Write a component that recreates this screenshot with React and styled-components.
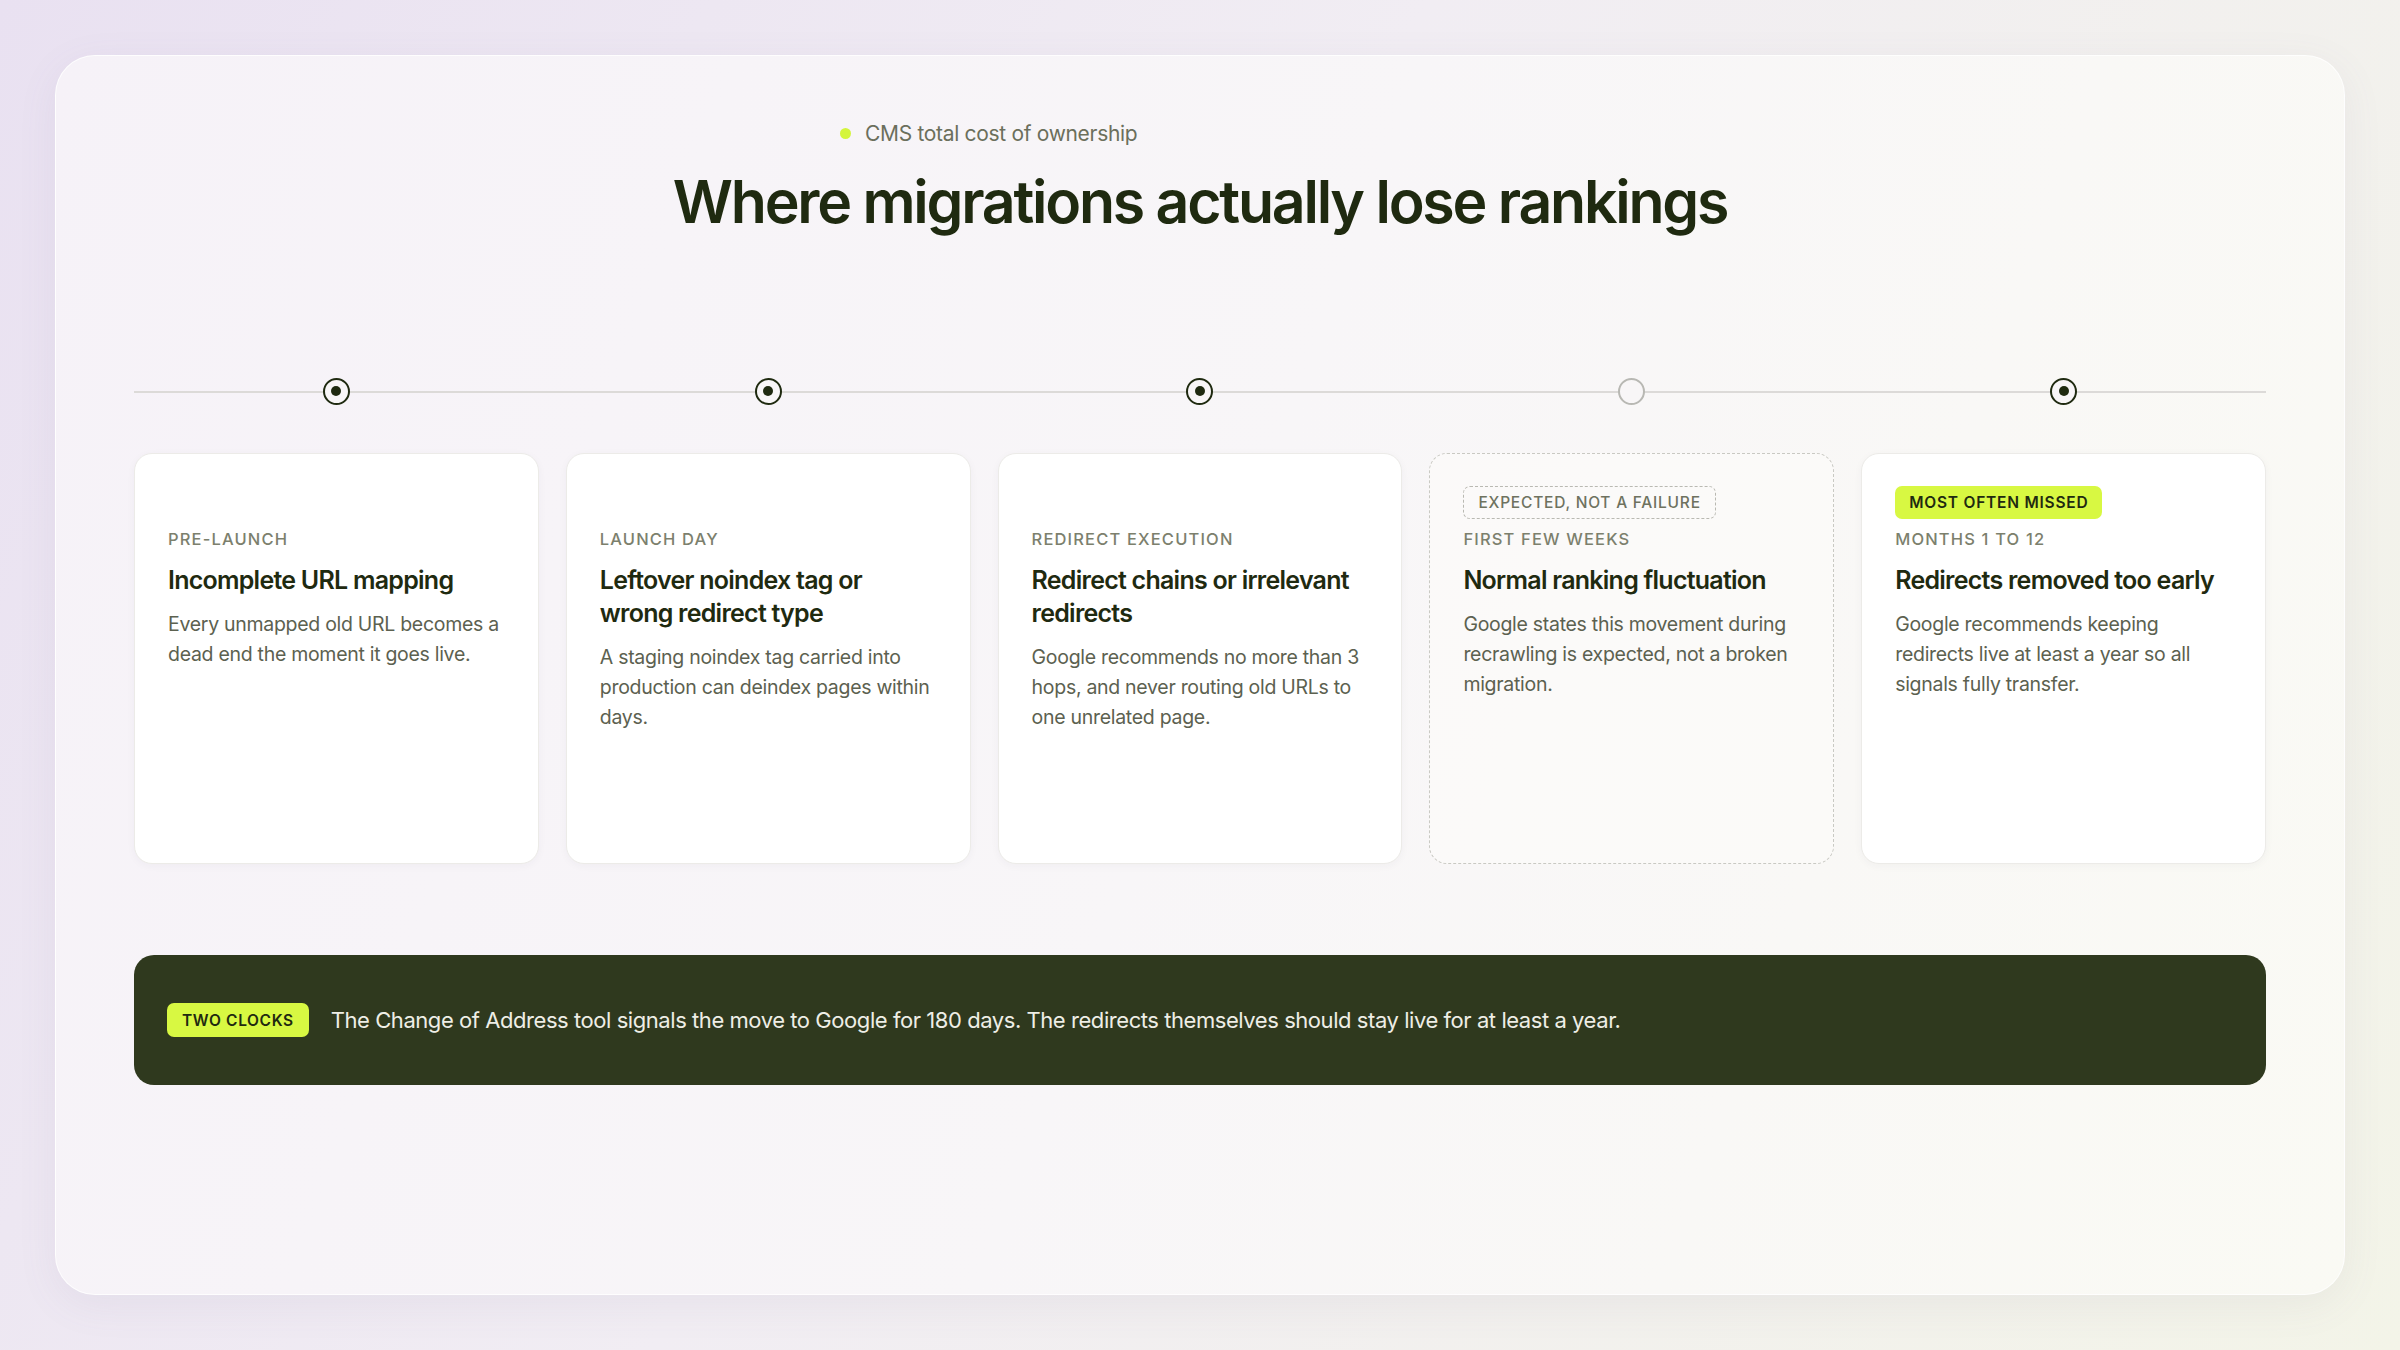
import React from "react";
import styled, { createGlobalStyle } from "styled-components";

const Global = createGlobalStyle`
  html, body { margin: 0; padding: 0; }
  body {
    width: 2400px; height: 1350px; overflow: hidden;
    font-family: Inter, "Noto Sans", sans-serif;
    background: linear-gradient(120deg, #e9e1f1 0%, #f1edf3 45%, #f3f4e8 100%);
  }
`;

const Page = styled.div`
  box-sizing: border-box;
  width: 2400px; height: 1350px;
  padding: 55px 55px;
`;

const Panel = styled.div`
  box-sizing: border-box;
  height: 1240px;
  border-radius: 40px;
  background: linear-gradient(110deg, #f6f2f8 0%, #f8f6f8 50%, #fafaf4 100%);
  border: 1px solid rgba(255,255,255,0.8);
  box-shadow: 0 10px 40px rgba(120, 100, 140, 0.08);
  padding: 62px 78px 0;
`;

const Eyebrow = styled.div`
  display: flex; align-items: center; gap: 14px;
  margin-left: 706px;
  font-size: 21px; color: #6b6f5c; height: 30px; letter-spacing: -0.015em;
`;

const Dot = styled.span`
  width: 11px; height: 11px; border-radius: 50%; background: #d4f53c;
`;

const Title = styled.h1`
  margin: 18px 0 0; text-align: center;
  font-size: 59px; font-weight: 600; letter-spacing: -0.038em;
  color: #1f2a10; line-height: 72px;
`;

const Timeline = styled.div`
  position: relative;
  margin-top: 139px;
  display: grid; grid-template-columns: repeat(5, 1fr); gap: 27px;
  height: 28px; align-items: center;
  &::before {
    content: ""; position: absolute; left: 0; right: 0; top: 50%;
    height: 1.5px; background: #dcdad8;
  }
`;

const Marker = styled.div`
  justify-self: center; position: relative;
  box-sizing: border-box; width: 27px; height: 27px; border-radius: 50%;
  border: 2.5px solid ${p => p.$empty ? "#b8b8b3" : "#1f2a10"};
  background: #f8f6f7;
  display: flex; align-items: center; justify-content: center;
  &::after {
    content: ""; display: ${p => p.$empty ? "none" : "block"};
    width: 10px; height: 10px; border-radius: 50%; background: #1f2a10;
  }
`;

const Cards = styled.div`
  margin-top: 48px;
  display: grid; grid-template-columns: repeat(5, 1fr); gap: 27px;
`;

const Card = styled.div`
  box-sizing: border-box; height: 411px;
  border-radius: 18px; padding: 32px 33px;
  background: ${p => p.$dashed ? "rgba(252,251,249,0.7)" : "#fff"};
  border: 1.5px ${p => p.$dashed ? "dashed #c9c9c3" : "solid #ecebe8"};
  box-shadow: ${p => p.$dashed ? "none" : "0 2px 8px rgba(60,50,70,0.04)"};
`;

const TagSlot = styled.div`height: 33px; margin-bottom: 8px; display: flex;`;

const Tag = styled.span`
  box-sizing: border-box; height: 33px; display: inline-flex; align-items: center;
  padding: 0 14px; border-radius: 7px;
  font-size: 15.5px; font-weight: 600; letter-spacing: 0.05em;
  ${p => p.$dashed
    ? "border: 1.5px dashed #b9b9b2; color: #6e725f; font-weight: 500;"
    : "background: #d8f842; color: #1f2a10;"}
`;

const Label = styled.div`
  font-size: 16.5px; font-weight: 500; letter-spacing: 0.07em;
  color: #7c806d; text-transform: uppercase; line-height: 24px;
`;

const CardTitle = styled.h3`
  margin: 13px 0 0; font-size: 25px; font-weight: 600; letter-spacing: -0.03em;
  line-height: 33px; color: #1f2a10;
`;

const Body = styled.p`
  margin: 12px 0 0; font-size: 19.5px; line-height: 30px; color: #5c6150;
  letter-spacing: -0.015em;
`;

const Banner = styled.div`
  margin-top: 91px; box-sizing: border-box; height: 130px;
  border-radius: 20px; background: #2f391e;
  display: flex; align-items: center; gap: 22px; padding: 0 33px;
`;

const BannerTag = styled.span`
  box-sizing: border-box; height: 34px; display: inline-flex; align-items: center;
  padding: 0 15px; border-radius: 7px; background: #d8f842; color: #1f2a10;
  font-size: 15.5px; font-weight: 600; letter-spacing: 0.04em;
`;

const BannerText = styled.span`
  font-size: 22px; color: #eeeee6; letter-spacing: -0.02em;
`;

const steps = [
  { label: "Pre-launch", title: "Incomplete URL mapping", body: "Every unmapped old URL becomes a dead end the moment it goes live." },
  { label: "Launch day", title: "Leftover noindex tag or wrong redirect type", body: "A staging noindex tag carried into production can deindex pages within days." },
  { label: "Redirect execution", title: "Redirect chains or irrelevant redirects", body: "Google recommends no more than 3 hops, and never routing old URLs to one unrelated page." },
  { label: "First few weeks", title: "Normal ranking fluctuation", body: "Google states this movement during recrawling is expected, not a broken migration.", tag: "EXPECTED, NOT A FAILURE", dashed: true },
  { label: "Months 1 to 12", title: "Redirects removed too early", body: "Google recommends keeping redirects live at least a year so all signals fully transfer.", tag: "MOST OFTEN MISSED" },
];

export default function App() {
  return (
    <Page>
      <Global />
      <Panel>
        <Eyebrow><Dot />CMS total cost of ownership</Eyebrow>
        <Title>Where migrations actually lose rankings</Title>
        <Timeline>
          {steps.map((s, i) => <Marker key={i} $empty={s.dashed} />)}
        </Timeline>
        <Cards>
          {steps.map((s, i) => (
            <Card key={i} $dashed={s.dashed}>
              <TagSlot>{s.tag && <Tag $dashed={s.dashed}>{s.tag}</Tag>}</TagSlot>
              <Label>{s.label}</Label>
              <CardTitle>{s.title}</CardTitle>
              <Body>{s.body}</Body>
            </Card>
          ))}
        </Cards>
        <Banner>
          <BannerTag>TWO CLOCKS</BannerTag>
          <BannerText>The Change of Address tool signals the move to Google for 180 days. The redirects themselves should stay live for at least a year.</BannerText>
        </Banner>
      </Panel>
    </Page>
  );
}
